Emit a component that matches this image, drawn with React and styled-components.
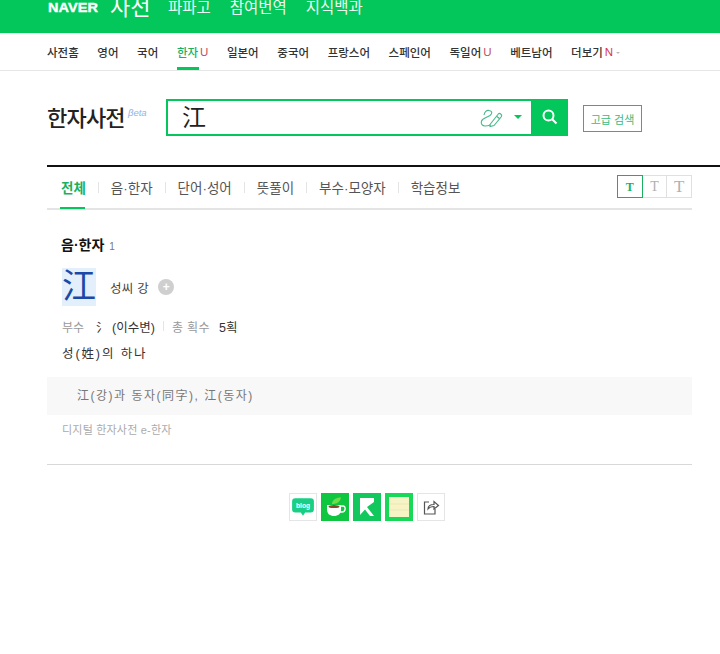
import React from "react";
import styled, { createGlobalStyle } from "styled-components";

const Global = createGlobalStyle`
  html, body { margin: 0; padding: 0; background: #fff; overflow: hidden; }
  body { font-family: "Liberation Sans", "Noto Sans CJK KR", sans-serif; color: #222; }
  a { color: inherit; text-decoration: none; }
`;

const Page = styled.div`
  width: 720px;
  height: 654px;
  overflow: hidden;
`;

const TopBar = styled.header`
  height: 33px;
  background: #03c75a;
  padding-left: 48px;
  overflow: hidden;
  border-bottom: 1px solid #e9f5ee;
`;

const TopRow = styled.div`
  display: flex;
  align-items: center;
  height: 15px;
  color: #fff;
`;

const Logo = styled.span`
  font-weight: 700;
  font-size: 13.5px;
  letter-spacing: 0.1px;
  transform: scaleX(1.07);
  transform-origin: left center;
  width: 62px;
  -webkit-text-stroke: 0.4px #fff;
`;

const Service = styled.span`
  font-size: 22px;
  line-height: 15px;
  width: 58px;
`;

const TopLink = styled.a`
  font-size: 15.5px;
  line-height: 15px;
  margin-right: 19px;
  opacity: 0.92;
`;

const Nav = styled.nav`
  display: flex;
  align-items: center;
  gap: 18.6px;
  height: 36px;
  padding-left: 47px;
  border-bottom: 1px solid #e6e6e6;
`;

const NavItem = styled.a`
  position: relative;
  display: flex;
  align-items: center;
  height: 36px;
  font-size: 11.5px;
  font-weight: 500;
  color: ${(p) => (p.$active ? "#19b15e" : "#333")};
`;

const ActiveBar = styled.i`
  position: absolute;
  left: 0;
  bottom: 0;
  width: 22px;
  height: 3px;
  background: #03c75a;
`;

const Mark = styled.em`
  font-style: normal;
  font-weight: 400;
  margin-left: 2px;
  color: ${(p) => p.$color || "#c0505f"};
`;

const Caret = styled.i`
  width: 0;
  height: 0;
  margin: 1px 0 0 3px;
  border-left: 2px solid transparent;
  border-right: 2px solid transparent;
  border-top: 2px solid #bbb;
`;

const SearchArea = styled.section`
  display: flex;
  align-items: center;
  height: 94px;
  padding-left: 47px;
`;

const Title = styled.h1`
  width: 81px;
  margin: 1px 0 0;
  font-size: 22px;
  line-height: 30px;
  font-weight: 500;
  color: #222;
  letter-spacing: -0.8px;
  white-space: nowrap;
`;

const Beta = styled.span`
  width: 38px;
  margin-top: -11px;
  font: italic 9.5px "Liberation Sans", sans-serif;
  color: #8fb4e6;
`;

const SearchBox = styled.div`
  display: flex;
  align-items: center;
  box-sizing: border-box;
  width: 402px;
  height: 37px;
  margin-top: -2px;
  border: 2px solid #03c75a;
`;

const Query = styled.div`
  flex: 1;
  padding-left: 14px;
  font-size: 24px;
  line-height: 30px;
  margin-top: 1px;
  color: #222;
`;

const Pen = styled.svg`
  width: 23px;
  height: 17px;
  margin: 3px 11px 0 0;
  overflow: visible;
`;

const DropCaret = styled.i`
  width: 0;
  height: 0;
  margin-right: 9px;
  border-left: 4px solid transparent;
  border-right: 4px solid transparent;
  border-top: 4px solid #03c75a;
`;

const SearchButton = styled.button`
  display: flex;
  align-items: center;
  justify-content: center;
  width: 37px;
  height: 37px;
  margin-right: -2px;
  padding: 0;
  border: 0;
  background: #03c75a;
`;

const Advanced = styled.button`
  box-sizing: border-box;
  width: 59px;
  height: 27px;
  margin-left: 15px;
  margin-top: 1px;
  padding: 0;
  border: 1px solid #2bb673;
  background: #fff;
  color: #3cbb7c;
  font: 400 11px "Liberation Sans", "Noto Sans CJK KR", sans-serif;
`;

const Content = styled.main`
  margin-left: 47px;
  border-top: 2px solid #111;
`;

const TabRow = styled.div`
  display: flex;
  align-items: center;
  box-sizing: border-box;
  width: 645px;
  height: 43px;
  padding-left: 14px;
  border-bottom: 2px solid #e4e4e4;
`;

const Tab = styled.a`
  position: relative;
  display: flex;
  align-items: center;
  height: 41px;
  margin-top: -1px;
  font-size: 13.5px;
  font-weight: ${(p) => (p.$active ? 700 : 400)};
  color: ${(p) => (p.$active ? "#19b15e" : "#555")};
`;

const TabLine = styled.i`
  position: absolute;
  left: -1px;
  right: 1px;
  bottom: -1px;
  height: 2px;
  background: #03c75a;
`;

const TabDivider = styled.i`
  width: 1px;
  height: 11px;
  margin: 0 12px;
  background: #e4e4e4;
`;

const FontSizes = styled.div`
  display: flex;
  margin-left: auto;
  margin-top: -2px;
`;

const FontSize = styled.button`
  box-sizing: border-box;
  width: 25.67px;
  height: 23px;
  margin-left: -1px;
  padding: 0;
  border: 1px solid ${(p) => (p.$active ? "#19b15e" : "#e0e0e0")};
  position: relative;
  z-index: ${(p) => (p.$active ? 1 : 0)};
  background: #fff;
  color: ${(p) => (p.$active ? "#19b15e" : "#b0b0b0")};
  font-family: "Liberation Serif", serif;
  font-weight: ${(p) => (p.$active ? 700 : 400)};
  font-size: ${(p) => p.$size}px;
  line-height: 20px;
`;

const Body = styled.div`
  width: 645px;
  padding: 25px 0 0;
`;

const SectionTitle = styled.h2`
  display: flex;
  align-items: baseline;
  margin: 0 0 0 14px;
  height: 20px;
  font-size: 14px;
  line-height: 20px;
  font-weight: 700;
  color: #111;
`;

const Count = styled.span`
  margin-left: 5px;
  font-size: 10px;
  font-weight: 400;
  color: #777;
`;

const EntryRow = styled.div`
  display: flex;
  align-items: center;
  margin: 13px 0 0 15px;
`;

const Hanja = styled.a`
  width: 34px;
  height: 38px;
  background: #e3f0fb;
  color: #1a49a8;
  font-size: 34px;
  line-height: 36px;
  text-align: center;
`;

const Meaning = styled.span`
  margin-left: 14px;
  font-size: 12.5px;
  letter-spacing: 0.3px;
  color: #444;
`;

const Plus = styled.i`
  display: flex;
  align-items: center;
  justify-content: center;
  width: 16px;
  height: 16px;
  margin-left: 9px;
  border-radius: 50%;
  background: #cfcfcf;
  color: #fff;
  font: 700 12px/16px "Liberation Sans", sans-serif;
`;

const InfoRow = styled.div`
  display: flex;
  align-items: center;
  margin: 11px 0 0 15px;
  height: 18px;
  font-size: 12.5px;
  color: #333;
`;

const InfoLabel = styled.span`
  color: #999;
  margin-right: ${(p) => p.$gap}px;
  letter-spacing: ${(p) => p.$spacing || 0}px;
  font-size: 12px;
`;

const InfoDivider = styled.i`
  width: 1px;
  height: 10px;
  margin: 0 8px;
  background: #e4e4e4;
`;

const Definition = styled.p`
  margin: 10px 0 0 15px;
  font-size: 12.5px;
  line-height: 18px;
  letter-spacing: 1.9px;
  color: #333;
`;

const Note = styled.div`
  height: 38px;
  margin-top: 14px;
  padding-left: 30px;
  background: #f8f8f8;
  font-size: 12px;
  line-height: 38px;
  letter-spacing: 1.5px;
  color: #777;
`;

const Source = styled.p`
  margin: 7px 0 0 15px;
  font-size: 11px;
  line-height: 16px;
  letter-spacing: 0.2px;
  color: #aaa;
`;

const Rule = styled.hr`
  margin: 26px 0 0;
  border: 0;
  border-top: 1px solid #d8d8d8;
`;

const Share = styled.div`
  display: flex;
  justify-content: center;
  gap: 4px;
  margin-top: 28px;
  margin-left: -6px;
`;

const ShareButton = styled.a`
  display: flex;
  align-items: center;
  justify-content: center;
  box-sizing: border-box;
  width: 28px;
  height: 28px;
  background: ${(p) => p.$fill || "#fff"};
  border: ${(p) => (p.$fill ? "0" : "1px solid #e5e5e5")};
`;

const BlogLabel = styled.text`
  font: 700 6px "Liberation Sans", sans-serif;
  fill: #fff;
`;

export default function App() {
  const menu = ["사전홈", "영어", "국어"];
  const menu2 = ["일본어", "중국어", "프랑스어", "스페인어"];
  const tabs = ["음·한자", "단어·성어", "뜻풀이", "부수·모양자", "학습정보"];

  return (
    <Page>
      <Global />
      <TopBar>
        <TopRow>
          <Logo>NAVER</Logo>
          <Service>사전</Service>
          <TopLink>파파고</TopLink>
          <TopLink>참여번역</TopLink>
          <TopLink>지식백과</TopLink>
        </TopRow>
      </TopBar>
      <Nav>
        {menu.map((m) => (
          <NavItem key={m}>{m}</NavItem>
        ))}
        <NavItem $active>
          한자<Mark>U</Mark>
          <ActiveBar />
        </NavItem>
        {menu2.map((m) => (
          <NavItem key={m}>{m}</NavItem>
        ))}
        <NavItem>
          독일어<Mark>U</Mark>
        </NavItem>
        <NavItem>베트남어</NavItem>
        <NavItem>
          더보기<Mark $color="#d8374a">N</Mark>
          <Caret />
        </NavItem>
      </Nav>
      <SearchArea>
        <Title>한자사전</Title>
        <Beta>βeta</Beta>
        <SearchBox>
          <Query>江</Query>
          <Pen viewBox="0 0 23 17" fill="none" stroke="#45b98a" strokeWidth="1.1">
            <path d="M4 5 C4.5 2 6.5 0 9 0.5 C12.5 1 12.5 3.5 10 5.5 C7 7.5 2.5 8 1.5 11 C0.5 14 2.5 16 5 16 C7 16 9 15.5 10.5 15" />
            <path d="M10 14.5 L18.3 4 C19.5 2.5 22.5 4.5 21.5 6.5 L14 15.5 L10 16.5 Z" />
            <path d="M16.5 6.2 L19.8 8.8" />
          </Pen>
          <DropCaret />
          <SearchButton aria-label="검색">
            <svg width="18" height="18" viewBox="0 0 18 18" fill="none" stroke="#fff" strokeWidth="2">
              <circle cx="7.5" cy="7.5" r="5" />
              <path d="M11.2 11.2 L15.5 15.5" />
            </svg>
          </SearchButton>
        </SearchBox>
        <Advanced>고급 검색</Advanced>
      </SearchArea>
      <Content>
        <TabRow>
          <Tab $active>
            전체
            <TabLine />
          </Tab>
          {tabs.map((t) => (
            <React.Fragment key={t}>
              <TabDivider />
              <Tab>{t}</Tab>
            </React.Fragment>
          ))}
          <FontSizes>
            <FontSize $active $size={12}>T</FontSize>
            <FontSize $size={14}>T</FontSize>
            <FontSize $size={17}>T</FontSize>
          </FontSizes>
        </TabRow>
        <Body>
          <SectionTitle>
            음·한자<Count>1</Count>
          </SectionTitle>
          <EntryRow>
            <Hanja>江</Hanja>
            <Meaning>성씨 강</Meaning>
            <Plus>+</Plus>
          </EntryRow>
          <InfoRow>
            <InfoLabel $gap={12}>부수</InfoLabel>
            <span>氵 (이수변)</span>
            <InfoDivider />
            <InfoLabel $gap={9} $spacing={0.4}>총 획수</InfoLabel>
            <span>5획</span>
          </InfoRow>
          <Definition>성(姓)의 하나</Definition>
          <Note>江(강)과 동자(同字), 江(동자)</Note>
          <Source>디지털 한자사전 e-한자</Source>
          <Rule />
          <Share>
            <ShareButton aria-label="블로그">
              <svg width="24" height="22" viewBox="0 0 22 20">
                <path d="M4 2 H18 A3 3 0 0 1 21 5 V12 A3 3 0 0 1 18 15 H13 L11 18 L9 15 H4 A3 3 0 0 1 1 12 V5 A3 3 0 0 1 4 2 Z" fill="#19cf86" />
                <BlogLabel x="11" y="11" textAnchor="middle">blog</BlogLabel>
              </svg>
            </ShareButton>
            <ShareButton $fill="#0fc640" aria-label="카페">
              <svg width="24" height="24" viewBox="0 0 24 24">
                <path d="M4 10 H18 V14 C18 19 15 21 11 21 C7 21 4 19 4 14 Z" fill="#fff" />
                <path d="M18 11 H20 C23 11 23 17 19 17 H17" fill="none" stroke="#fff" strokeWidth="1.4" />
                <ellipse cx="11" cy="11.5" rx="5.5" ry="1.6" fill="#8a4a2a" />
                <path d="M9 9 C9 5 13 2.5 18 2.5 C17 7 14 9 9 9 Z" fill="#6fdc4a" />
              </svg>
            </ShareButton>
            <ShareButton $fill="#12c85c" aria-label="북마크">
              <svg width="20" height="22" viewBox="0 0 20 22">
                <path d="M3 2 H17 V6 L10 11 L17 20 H13 L8 13.5 L3 19 Z" fill="#fff" />
              </svg>
            </ShareButton>
            <ShareButton $fill="#17d957" aria-label="메모">
              <svg width="20" height="20" viewBox="0 0 20 20">
                <rect x="0" y="0" width="20" height="20" fill="#f6f3c4" />
                <path d="M0 7 H20 M0 13 H20" stroke="#ece8b4" strokeWidth="1" />
              </svg>
            </ShareButton>
            <ShareButton aria-label="공유">
              <svg width="18" height="18" viewBox="0 0 18 18" fill="none" stroke="#555" strokeWidth="1.2">
                <path d="M7 4 H2.5 V16 H13 V11" />
                <path d="M6 11 C6 8 8 6.5 12 6.5 V3.5 L16.5 7.5 L12 11 V8.5 C9.5 8.5 7.5 9 6 11 Z" />
              </svg>
            </ShareButton>
          </Share>
        </Body>
      </Content>
    </Page>
  );
}
